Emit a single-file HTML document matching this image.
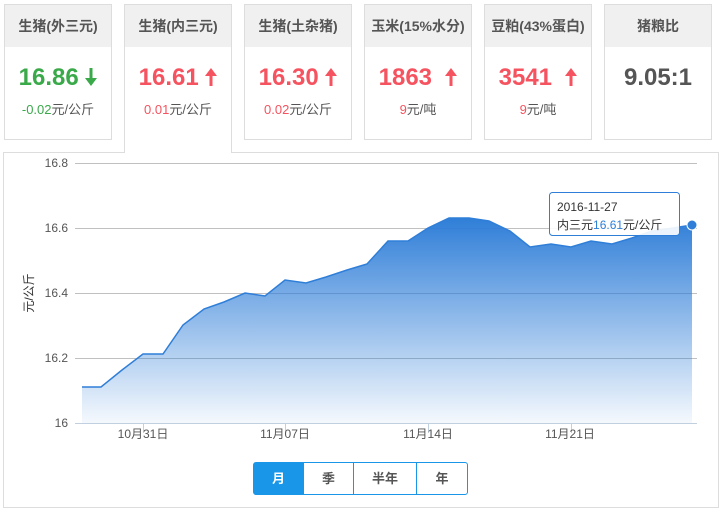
<!DOCTYPE html><html><head><meta charset="utf-8"><style>
body{margin:0;width:725px;height:512px;background:#fff;font-family:"Liberation Sans","Noto Sans CJK SC",sans-serif;position:relative;overflow:hidden}
.c{position:absolute;top:4px;width:108px;height:136px;border:1px solid #ddd;box-sizing:border-box;text-align:center;background:#fff}
.c .h{height:42px;background:#f0f0f0;line-height:42px;font-size:14px;font-weight:bold;color:#555}
.c .v{margin-top:16px;font-size:24px;font-weight:bold;line-height:30px}
.c .s{font-size:13px;color:#555;margin-top:6px}
.r{color:#f5535f}.g{color:#3aa94a}
.act{height:149px;border-bottom:none;z-index:2}
.box{position:absolute;left:3px;top:152px;width:716px;height:356px;border:1px solid #ddd;box-sizing:border-box}
.btns{position:absolute;left:253px;top:462px;height:33px;width:215px;border:1px solid #1a96e8;border-radius:3px;box-sizing:border-box;display:flex;font-size:13px;font-weight:bold;color:#555}
.btns div{line-height:31px;text-align:center;border-left:1px solid #1a96e8}
svg.a{vertical-align:-1px}
</style></head><body>
<div class="c" style="left:4px"><div class="h">生猪(外三元)</div><div class="v g">16.86 <svg class="a" width="12" height="18" viewBox="0 0 12 18"><path d="M4.5,0h3v10h4.5L6,18L0,10h4.5z" fill="#3aa94a"/></svg></div><div class="s"><span class="g">-0.02</span>元/公斤</div></div>
<div class="c act" style="left:124px"><div class="h">生猪(内三元)</div><div class="v r">16.61 <svg class="a" width="12" height="18" viewBox="0 0 12 18"><path d="M4.5,18h3V8h4.5L6,0L0,8h4.5z" fill="#f5535f"/></svg></div><div class="s"><span class="r">0.01</span>元/公斤</div></div>
<div class="c" style="left:244px"><div class="h">生猪(土杂猪)</div><div class="v r">16.30 <svg class="a" width="12" height="18" viewBox="0 0 12 18"><path d="M4.5,18h3V8h4.5L6,0L0,8h4.5z" fill="#f5535f"/></svg></div><div class="s"><span class="r">0.02</span>元/公斤</div></div>
<div class="c" style="left:364px"><div class="h">玉米(15%水分)</div><div class="v r">1863 &nbsp;<svg class="a" width="12" height="18" viewBox="0 0 12 18"><path d="M4.5,18h3V8h4.5L6,0L0,8h4.5z" fill="#f5535f"/></svg></div><div class="s"><span class="r">9</span>元/吨</div></div>
<div class="c" style="left:484px"><div class="h">豆粕(43%蛋白)</div><div class="v r">3541 &nbsp;<svg class="a" width="12" height="18" viewBox="0 0 12 18"><path d="M4.5,18h3V8h4.5L6,0L0,8h4.5z" fill="#f5535f"/></svg></div><div class="s"><span class="r">9</span>元/吨</div></div>
<div class="c" style="left:604px"><div class="h">猪粮比</div><div class="v" style="color:#555">9.05:1</div></div>
<div class="box"></div>
<svg style="position:absolute;left:0;top:0" width="725" height="512" font-family="Liberation Sans,Noto Sans CJK SC,sans-serif">
<defs><linearGradient id="gr" x1="0" y1="0" x2="0" y2="1"><stop offset="0" stop-color="#2f7ed8"/><stop offset="1" stop-color="#2f7ed8" stop-opacity="0.05"/></linearGradient></defs>
<g stroke="#c0c0c0" stroke-width="1"><line x1="75" y1="163.5" x2="697" y2="163.5"/><line x1="75" y1="228.5" x2="697" y2="228.5"/><line x1="75" y1="293.5" x2="697" y2="293.5"/><line x1="75" y1="358.5" x2="697" y2="358.5"/><line x1="75" y1="423.5" x2="697" y2="423.5" stroke="#c0d0e0"/></g>
<path d="M82,387 L101,387 122,370 143,354 163,354 183,325 204,309 224,302 245,293 265,296 285,280 306,283 326,277 347,270 367,264 388,241 408,241 428,228 449,218 469,218 489,221 510,231 530,247 551,244 571,247 591,241 612,244 632,238 652,231 673,228 692,225 L692,423 L82,423Z" fill="url(#gr)"/>
<path d="M82,387 L101,387 122,370 143,354 163,354 183,325 204,309 224,302 245,293 265,296 285,280 306,283 326,277 347,270 367,264 388,241 408,241 428,228 449,218 469,218 489,221 510,231 530,247 551,244 571,247 591,241 612,244 632,238 652,231 673,228 692,225" fill="none" stroke="#2f7ed8" stroke-width="1.5"/>
<circle cx="692" cy="225" r="5" fill="#2f7ed8" stroke="#fff" stroke-width="1"/>
<g font-size="12" fill="#555" text-anchor="end"><text x="68" y="167">16.8</text><text x="68" y="232">16.6</text><text x="68" y="297">16.4</text><text x="68" y="362">16.2</text><text x="68" y="427">16</text></g>
<text transform="translate(33,293) rotate(-90)" font-size="12" fill="#333" text-anchor="middle">元/公斤</text>
<g stroke="#c0d0e0"><line x1="143.5" y1="423" x2="143.5" y2="433"/><line x1="285.5" y1="423" x2="285.5" y2="433"/><line x1="428.5" y1="423" x2="428.5" y2="433"/><line x1="571.5" y1="423" x2="571.5" y2="433"/></g>
<g font-size="12" fill="#555" text-anchor="middle"><text x="143" y="438">10月31日</text><text x="285" y="438">11月07日</text><text x="428" y="438">11月14日</text><text x="570" y="438">11月21日</text></g>
<rect x="549.5" y="192.5" width="130" height="43" rx="3" fill="#fff" fill-opacity="0.9" stroke="#2f7ed8"/>
<text x="557" y="211" font-size="12" fill="#333">2016-11-27</text>
<text x="557" y="229" font-size="12" fill="#333">内三元<tspan fill="#2f7ed8">16.61</tspan>元/公斤</text>
</svg>
<div class="btns"><div style="width:49px;background:#1a96e8;color:#fff;border-left:none">月</div><div style="width:49px">季</div><div style="width:62px">半年</div><div style="flex:1">年</div></div>
</body></html>
